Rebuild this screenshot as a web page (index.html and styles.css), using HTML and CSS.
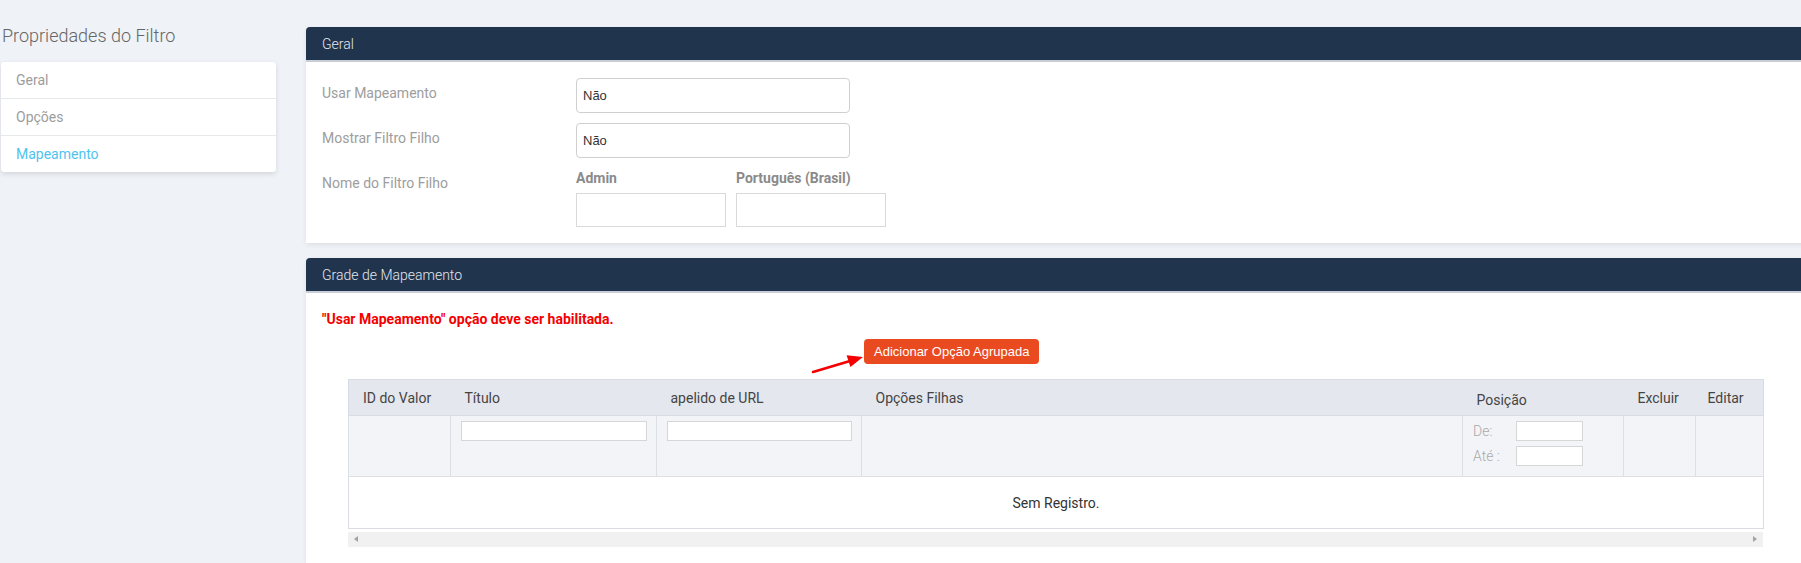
FILE: index.html
```
<!DOCTYPE html>
<html>
	<head>
		<meta charset="utf-8">
		<title>Propriedades do Filtro</title>
		<link rel="stylesheet" href="styles.css">
	</head>

	<body>
		<div class="page">
			<aside class="side">
				<h3 class="side-title">Propriedades do Filtro</h3>
				<ul class="side-menu">
					<li>Geral</li>
					<li>Opções</li>
					<li class="active">Mapeamento</li>
				</ul>
			</aside>

			<main class="content">
				<section class="panel">
					<div class="panel-head">Geral</div>
					<div class="panel-body">
						<div class="form-row">
							<label>Usar Mapeamento</label>
							<select class="sel"><option>Não</option></select>
						</div>
						<div class="form-row">
							<label>Mostrar Filtro Filho</label>
							<select class="sel"><option>Não</option></select>
						</div>
						<div class="form-row last">
							<label>Nome do Filtro Filho</label>
							<div class="langs">
								<div class="lang">
									<span class="lang-name">Admin</span>
									<input type="text" class="lang-input">
								</div>
								<div class="lang">
									<span class="lang-name">Português (Brasil)</span>
									<input type="text" class="lang-input">
								</div>
							</div>
						</div>
					</div>
				</section>

				<section class="panel">
					<div class="panel-head">Grade de Mapeamento</div>
					<div class="panel-body">
						<p class="warn">"Usar Mapeamento" opção deve ser habilitada.</p>
						<div class="add-row">
							<button class="btn-add">
								Adicionar Opção Agrupada
								<!-- seta vermelha apontando pro botao -->
								<svg class="arrow" width="56" height="26" viewBox="0 0 56 26">
									<line x1="5" y1="21" x2="42" y2="10" stroke="#f40000" stroke-width="2.6" stroke-linecap="round"/>
									<polygon points="55,6 42.4,16 38.6,4.2" fill="#f40000"/>
								</svg>
							</button>
						</div>

						<div class="grid-wrap">
							<table class="grid">
								<colgroup>
									<col style="width:102px">
									<col style="width:206px">
									<col style="width:205px">
									<col style="width:601px">
									<col style="width:161px">
									<col style="width:72px">
									<col style="width:68px">
								</colgroup>
								<tr class="grid-head">
									<th>ID do Valor</th>
									<th>Título</th>
									<th>apelido de URL</th>
									<th>Opções Filhas</th>
									<th class="pos-head">Posição</th>
									<th>Excluir</th>
									<th class="edit-head">Editar</th>
								</tr>
								<tr class="grid-filter">
									<td></td>
									<td><input type="text" class="filter-input"></td>
									<td><input type="text" class="filter-input"></td>
									<td></td>
									<td>
										<div class="range"><span>De:</span><input type="text" class="range-input"></div>
										<div class="range"><span>Até :</span><input type="text" class="range-input"></div>
									</td>
									<td></td>
									<td></td>
								</tr>
								<tr class="grid-empty">
									<td colspan="7">Sem Registro.</td>
								</tr>
							</table>
							<div class="hscroll">
								<span class="tri left"></span>
								<span class="tri right"></span>
							</div>
						</div>
					</div>
				</section>
			</main>
		</div>
	</body>
</html>
```

FILE: styles.css
```
body {
	margin: 0;
	background-color: #eff2f7;
	font-family: Roboto, "Liberation Sans", sans-serif;
	font-size: 14px;
	line-height: 20px;
	color: #333;
	overflow: hidden;
}

.page {
	display: flex;
	align-items: flex-start;
}

/* coluna da esquerda */
.side {
	width: 275px;
	margin-left: 1px;
	flex-shrink: 0;
}

.side-title {
	margin: 26px 0 16px 1px;
	font-size: 18px;
	font-weight: 300;
	line-height: 20px;
	color: #666;
}

.side-menu {
	list-style: none;
	margin: 0;
	padding: 0;
	background: #fff;
	border-radius: 3px;
	box-shadow: 0 2px 5px rgba(0, 0, 0, 0.12);
}

.side-menu li {
	height: 36px;
	line-height: 36px;
	padding: 0 15px;
	color: #9d9d9d;
	border-bottom: 1px solid #e6e8ec;
}

.side-menu li:last-child {
	border-bottom: 0;
}

.side-menu li.active {
	color: #4fc3ee;
}

/* paineis */
.content {
	width: 1500px;
	flex-shrink: 0;
	margin-left: 30px;
	padding-top: 27px;
}

.panel {
	background: #fff;
	border-radius: 4px 4px 0 0;
	box-shadow: 0 2px 5px rgba(0, 0, 0, 0.08);
	margin-bottom: 15px;
}

.panel-head {
	height: 33px;
	line-height: 34px;
	padding: 0 16px;
	background: #21344e;
	color: #e1e7ef;
	font-weight: 300;
	border-radius: 4px 4px 0 0;
	border-bottom: 2px solid #c9ced6;
}

.panel-body {
	padding: 16px 16px 16px;
}

.form-row {
	display: flex;
	margin-bottom: 10px;
}

.form-row.last {
	margin-bottom: 0;
}

.form-row label {
	width: 254px;
	padding-top: 5px;
	color: #9d9d9d;
}

.sel {
	appearance: none;
	-webkit-appearance: none;
	width: 274px;
	height: 35px;
	padding: 0 6px;
	border: 1px solid #cfcfcf;
	border-radius: 4px;
	background: #fff;
	font-family: "Liberation Sans", Arial, sans-serif;
	font-size: 13px;
	color: #333;
}

.langs {
	display: flex;
	gap: 10px;
}

.lang {
	display: flex;
	flex-direction: column;
}

.lang-name {
	font-weight: 700;
	color: #8a8a8a;
	margin-bottom: 5px;
}

.lang-input {
	width: 150px;
	height: 34px;
	box-sizing: border-box;
	border: 1px solid #d9d9d9;
	margin: 0;
}

/* grade */
.warn {
	margin: 0;
	color: #f40000;
	font-weight: 700;
}

.add-row {
	margin-top: 10px;
	padding-left: 542px;
}

.btn-add {
	position: relative;
	height: 25px;
	padding: 0 10px;
	border: 0;
	border-radius: 4px;
	background: #ea4a20;
	color: #fff;
	font-family: "Liberation Sans", Arial, sans-serif;
	font-size: 13px;
}

.arrow {
	position: absolute;
	left: -56px;
	top: 12px;
}

.grid-wrap {
	margin: 15px 27px 0 26px;
}

.grid {
	width: 100%;
	table-layout: fixed;
	border-collapse: collapse;
	border: 1px solid #d9dce2;
}

.grid th {
	height: 35px;
	padding: 0 14px;
	text-align: left;
	font-weight: 400;
	color: #444;
	background: #e4e7ee;
	border-bottom: 1px solid #d9dce2;
}

.grid th.pos-head {
	height: 31px;
	padding-top: 4px;
}

.grid .edit-head {
	padding-left: 12px;
}

.grid-filter td {
	height: 50px;
	padding: 5px 9px 5px 10px;
	vertical-align: top;
	background: #f3f4f7;
	border: 1px solid #dcdfe4;
	border-top: 0;
}

.filter-input {
	width: 100%;
	height: 20px;
	box-sizing: border-box;
	border: 1px solid #d6d6d6;
	margin: 0;
	display: block;
}

.range {
	display: flex;
	align-items: center;
	margin-bottom: 5px;
}

.range span {
	width: 43px;
	color: #aaa;
	font-weight: 300;
}

.range-input {
	width: 67px;
	height: 20px;
	box-sizing: border-box;
	border: 1px solid #d6d6d6;
	margin: 0;
}

.grid-empty td {
	height: 49px;
	text-align: center;
	color: #333;
	background: #fff;
}

.hscroll {
	position: relative;
	height: 15px;
	margin-top: 3px;
	background: #f1f1f1;
}

.tri {
	position: absolute;
	top: 4px;
	width: 0;
	height: 0;
	border-top: 3px solid transparent;
	border-bottom: 3px solid transparent;
}

.tri.left {
	left: 6px;
	border-right: 4px solid #a3a3a3;
}

.tri.right {
	right: 6px;
	border-left: 4px solid #a3a3a3;
}
```
